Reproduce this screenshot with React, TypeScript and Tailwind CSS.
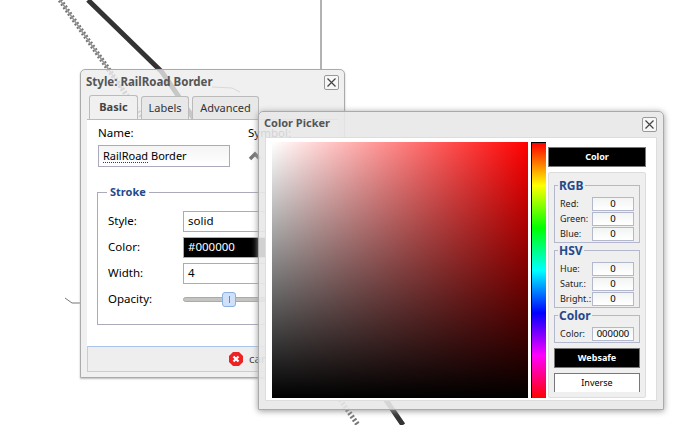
const CloseButton = () => (
  <div className="flex h-[15px] w-[15px] items-center justify-center rounded-[2px] border border-[#999] bg-[#f7f7f7]">
    <svg width="11" height="11" viewBox="0 0 11 11">
      <path d="M1.5 1.5 L9.5 9.5 M9.5 1.5 L1.5 9.5" stroke="#444" strokeWidth="1.2" fill="none" />
    </svg>
  </div>
);

const StrokeRow = ({ label, children }: { label: string; children: React.ReactNode }) => (
  <div className="flex h-[21px] items-center">
    <span className="w-[75px] text-[11.5px] text-black">{label}</span>
    {children}
  </div>
);

const StyleWindow = () => (
  <div className="absolute left-[80px] top-[69px] flex h-[309px] w-[265px] flex-col rounded-t-[5px] border border-[#aaa] bg-[#ececec]/80 px-[6px] shadow-[0_1px_2px_#bbb]">
    <div className="flex h-[25px] shrink-0 items-center justify-between">
      <span className="-ml-[1px] -mt-[2px] text-[11.5px] font-bold text-[#555]">Style: RailRoad Border</span>
      <div className="-mr-[1px]">
        <CloseButton />
      </div>
    </div>
    <div className="flex h-[24px] shrink-0 items-end gap-[3px] pl-[2px]">
      <div className="flex h-[24px] w-[49px] items-center justify-center rounded-t-[3px] border border-b-0 border-[#bbb] bg-[#f0f0f0] text-[11px] font-bold text-[#444]">
        Basic
      </div>
      <div className="flex h-[23px] w-[48px] items-center justify-center rounded-t-[3px] border border-b-0 border-[#bbb] bg-[#e8e8e8] text-[11px] text-[#333]">
        Labels
      </div>
      <div className="flex h-[23px] w-[67px] items-center justify-center rounded-t-[3px] border border-b-0 border-[#bbb] bg-[#e8e8e8] text-[11px] text-[#333]">
        Advanced
      </div>
    </div>
    <div className="h-[227px] shrink-0 border-t border-[#bbb] bg-white pl-[11px] pt-[5px]">
      <div className="flex h-[15px] items-center text-[11.5px] text-black">
        <span className="w-[150px]">Name:</span>
        <span>Symbol:</span>
      </div>
      <div className="mt-[5px] flex items-center">
        <div className="flex h-[22px] w-[132px] items-center border border-[#aab] bg-[linear-gradient(#f4f4f4,#fff)] pl-[4px] text-[11px] text-black">
          <span className="underline decoration-[#c00] decoration-dotted underline-offset-2">RailRoad</span>
          <span>&nbsp;Border</span>
        </div>
        <svg className="ml-[18px]" width="14" height="10" viewBox="0 0 14 10">
          <path d="M2 8 L7 3 L12 8" stroke="#777" strokeWidth="3.5" fill="none" />
        </svg>
      </div>
      <fieldset className="-ml-[1px] mt-[17px] h-[141px] w-[220px] border border-[#aab] pl-[10px]">
        <legend className="-ml-[1px] px-[3px] text-[11px] font-bold text-[#1f4a8c]">Stroke</legend>
        <div className="mt-[10px] flex flex-col gap-[5px]">
          <StrokeRow label="Style:">
            <div className="flex h-[21px] w-[100px] items-center border border-[#aab] pl-[4px] text-[11.5px] text-black">solid</div>
          </StrokeRow>
          <StrokeRow label="Color:">
            <div className="flex h-[21px] w-[100px] items-center border border-[#aab] bg-black pl-[4px] text-[11.5px] text-white">#000000</div>
          </StrokeRow>
          <StrokeRow label="Width:">
            <div className="flex h-[21px] w-[100px] items-center border border-[#aab] pl-[4px] text-[11.5px] text-black">4</div>
          </StrokeRow>
          <StrokeRow label="Opacity:">
            <div className="relative h-[5px] w-[100px] rounded-full border border-[#aaa] bg-[#c4c4c0]">
              <div className="absolute left-[38px] top-[-6px] flex h-[15px] w-[14px] items-center justify-center rounded-[3px] border border-[#8ab0e0] bg-[#cfe0f8]">
                <div className="h-[7px] w-px bg-[#5f86c0]" />
              </div>
            </div>
          </StrokeRow>
        </div>
      </fieldset>
    </div>
    <div className="flex h-[26px] shrink-0 items-center border-x border-b border-t border-[#ccc] border-t-[#a9c4e8] bg-[#eee] pl-[141px]">
      <svg width="14" height="14" viewBox="0 0 14 14">
        <path d="M4 0 H10 L14 4 V10 L10 14 H4 L0 10 V4 Z" fill="#ee2222" />
        <path d="M4.5 4.5 L9.5 9.5 M9.5 4.5 L4.5 9.5" stroke="#fff" strokeWidth="2.2" fill="none" />
      </svg>
      <span className="ml-[6px] text-[11.5px] text-[#444]">cancel</span>
    </div>
  </div>
);

const ValueRow = ({ label, value }: { label: string; value: string }) => (
  <div className="flex h-[15px] items-center">
    <span className="w-[32px] text-[9px] text-[#222]">{label}</span>
    <div className="flex h-[14px] w-[42px] items-center justify-center border border-[#b4b8cc] bg-[linear-gradient(#f2f4f4,#fff)] pt-[2px] text-[9.5px] text-black">
      {value}
    </div>
  </div>
);

const ValueGroup = ({ title, rows, height }: { title: string; rows: string[][]; height: string }) => (
  <fieldset className={`ml-[5px] w-[86px] border border-[#b4b8cc] pl-[5px] ${height}`}>
    <legend className="-ml-[2px] px-[1px] text-[12px] leading-[13px] font-bold text-[#1f4a8c]">{title}</legend>
    <div className="flex flex-col pt-[4px]">
      {rows.map(([label, value]) => (
        <ValueRow key={label} label={label} value={value} />
      ))}
    </div>
  </fieldset>
);

const PickerWindow = () => (
  <div className="absolute left-[258px] top-[111px] flex h-[299px] w-[406px] flex-col rounded-t-[5px] border border-[#aaa] bg-[#e8e8e8]/90 px-[6px] shadow-[0_1px_6px_#999]">
    <div className="flex h-[25px] shrink-0 items-center justify-between">
      <span className="-ml-[1px] -mt-[3px] text-[11px] font-bold text-[#555]">Color Picker</span>
      <CloseButton />
    </div>
    <div className="flex h-[264px] shrink-0 border border-[#ddd] bg-white pl-[6px] pt-[4px]">
      <div className="h-[256px] w-[256px] bg-[linear-gradient(to_top,#000,transparent),linear-gradient(to_right,#fff,#f00)]" />
      <div className="ml-[3px] h-[256px] w-[15px] border-l border-t border-black bg-[linear-gradient(#f00,#ff0,#0f0,#0ff,#00f,#f0f,#f00)]" />
      <div className="ml-[2px] mt-[5px] flex w-[98px] flex-col">
        <div className="flex h-[20px] items-center justify-center border border-[#777] bg-black text-[9px] font-bold text-white">
          Color
        </div>
        <div className="mt-[5px] flex h-[226px] flex-col rounded-[2px] border border-[#ddd] bg-[#efefef] pt-[6px]">
          <ValueGroup
            title="RGB"
            height="h-[64px]"
            rows={[
              ["Red:", "0"],
              ["Green:", "0"],
              ["Blue:", "0"],
            ]}
          />
          <ValueGroup
            title="HSV"
            height="mt-[1px] h-[64px]"
            rows={[
              ["Hue:", "0"],
              ["Satur.:", "0"],
              ["Bright.:", "0"],
            ]}
          />
          <ValueGroup title="Color" height="mt-[1px] h-[34px]" rows={[["Color:", "000000"]]} />
          <div className="ml-[5px] mt-[5px] flex h-[20px] w-[86px] items-center justify-center border border-[#777] bg-black text-[9px] font-bold text-white">
            Websafe
          </div>
          <div className="ml-[5px] mt-[5px] flex h-[19px] w-[86px] items-center justify-center border border-b-0 border-[#777] bg-white text-[9px] text-black">
            Inverse
          </div>
        </div>
      </div>
    </div>
  </div>
);

const MapLines = () => (
  <svg className="absolute left-0 top-0" width="680" height="425" viewBox="0 0 680 425">
    <path d="M88 0 L162 72 L403 425" stroke="#333" strokeWidth="5" fill="none" />
    <path d="M60 0 L123 90 L358 425" stroke="#777" strokeWidth="5" strokeDasharray="2 2" fill="none" />
    <path d="M60 0 L123 90" stroke="#999" strokeWidth="1.5" fill="none" />
    <path d="M321 0 V69" stroke="#666" strokeWidth="1" fill="none" />
    <path d="M65 298 L72 303 H80" stroke="#777" strokeWidth="1" fill="none" />
    <path d="M212 87 L232 88 L240 92" stroke="#888" strokeWidth="1" fill="none" />
  </svg>
);

export default function App() {
  return (
    <div className="relative h-[425px] w-[680px] overflow-hidden bg-white font-['Noto_Sans',sans-serif]">
      <MapLines />
      <StyleWindow />
      <PickerWindow />
    </div>
  );
}
